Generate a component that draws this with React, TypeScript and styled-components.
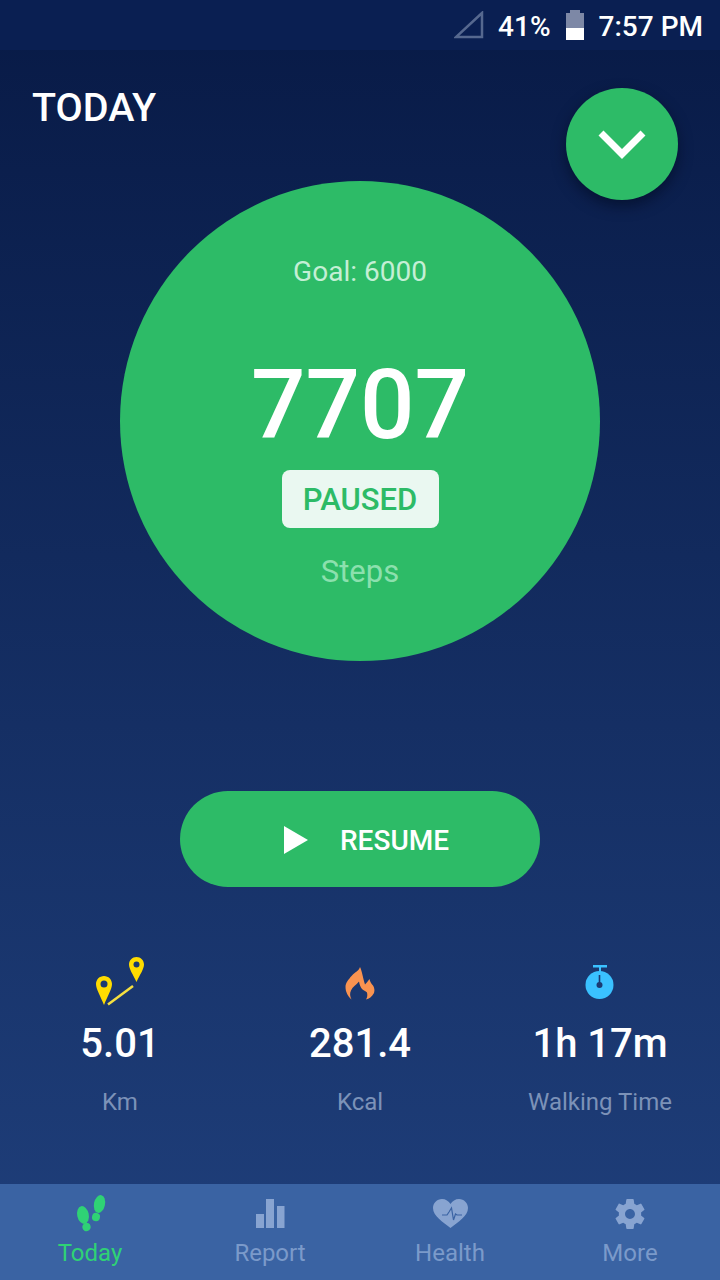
import React, { FC, ReactElement, ReactNode } from "react"
import styled, { createGlobalStyle } from "styled-components"

const GlobalStyle = createGlobalStyle`
  html, body {
    margin: 0;
    padding: 0;
    background: #0a1c48;
  }

  * {
    box-sizing: border-box;
  }
`

const Screen = styled.div`
  width: 720px;
  height: 1280px;
  display: flex;
  flex-direction: column;
  overflow: hidden;
  font-family: Roboto, "Liberation Sans", sans-serif;
  color: #fff;
  background: linear-gradient(180deg, #081a46 0%, #1f3f7b 100%);
`

const StatusBar = styled.div`
  height: 50px;
  flex: none;
  display: flex;
  align-items: center;
  justify-content: flex-end;
  padding: 2px 17px 0 14px;
  background: #0a1f52;
  font-size: 28px;
  font-weight: 500;
`

const SignalIcon = styled.svg`
  width: 30px;
  height: 28px;
  margin: 0 14px 2px 0;
`

const BatteryIcon = styled.svg`
  width: 20px;
  height: 30px;
  margin: 0 14px 2px;
`

const Main = styled.main`
  position: relative;
  flex: 1;
  display: flex;
  flex-direction: column;
  align-items: center;
`

const Title = styled.h1`
  align-self: flex-start;
  margin: 36px 0 0 32px;
  height: 44px;
  line-height: 44px;
  font-size: 39.5px;
  font-weight: 500;
`

const Fab = styled.button`
  position: absolute;
  top: 38px;
  right: 42px;
  width: 112px;
  height: 112px;
  padding: 0;
  border: none;
  border-radius: 50%;
  display: flex;
  align-items: center;
  justify-content: center;
  background: #2dbb67;
  box-shadow: 0 6px 14px rgba(2, 10, 30, 0.55);
`

const StepCircle = styled.section`
  width: 480px;
  height: 480px;
  margin-top: 51px;
  flex: none;
  border-radius: 50%;
  display: flex;
  flex-direction: column;
  align-items: center;
  background: #2dbb67;
`

const Goal = styled.div`
  margin-top: 73px;
  height: 36px;
  line-height: 36px;
  font-size: 28px;
  color: #c4efd5;
`

const StepCount = styled.div`
  margin-top: 63px;
  height: 104px;
  line-height: 104px;
  font-size: 96px;
  font-weight: 500;
`

const PausedBadge = styled.div`
  margin-top: 13px;
  width: 157px;
  height: 58px;
  border-radius: 8px;
  display: flex;
  align-items: center;
  justify-content: center;
  background: #eaf8f1;
  color: #2dbb67;
  font-size: 31px;
  font-weight: 500;
`

const StepsLabel = styled.div`
  margin-top: 24px;
  height: 40px;
  line-height: 40px;
  font-size: 31px;
  color: #8ce0ae;
`

const ResumeButton = styled.button`
  margin-top: 130px;
  width: 360px;
  height: 96px;
  flex: none;
  border: none;
  border-radius: 48px;
  display: flex;
  align-items: center;
  justify-content: center;
  gap: 32px;
  padding: 2px 0 0 13px;
  background: #2dbb67;
  color: #fff;
  font-family: inherit;
  font-size: 28px;
  font-weight: 500;
`

const StatsRow = styled.section`
  width: 100%;
  margin-top: 70px;
  display: grid;
  grid-template-columns: repeat(3, 1fr);
`

const Stat = styled.div`
  display: flex;
  flex-direction: column;
  align-items: center;
`

const StatIcon = styled.div`
  height: 52px;
  display: flex;
  align-items: center;
  justify-content: center;
`

const StatValue = styled.div`
  margin-top: 11px;
  height: 48px;
  line-height: 48px;
  font-size: 40px;
  font-weight: 500;
`

const StatLabel = styled.div`
  margin-top: 18px;
  height: 32px;
  line-height: 32px;
  font-size: 24px;
  color: #7c92b8;
`

const TabBar = styled.nav`
  height: 96px;
  flex: none;
  display: grid;
  grid-template-columns: repeat(4, 180px);
  background: #3a63a3;
`

const Tab = styled.div<{ $active?: boolean }>`
  display: flex;
  flex-direction: column;
  align-items: center;
  padding-top: 10px;
  font-size: 24px;
  color: ${({ $active }) => ($active ? "#2fd275" : "#7b9aca")};
`

const TabIcon = styled.svg<{ $active?: boolean }>`
  width: 40px;
  height: 40px;
  fill: ${({ $active }) => ($active ? "#2fd275" : "#88a4d1")};
  margin-bottom: 5px;
`

const RouteIcon = () => (
  <svg width="56" height="52" viewBox="0 0 56 52">
    <path d="M12 19c-4.500 0-8 3.600-8 8 0 5 4.500 12 8 21 3.500-9 8-16 8-21 0-4.400-3.500-8-8-8z" fill="#ffdc00" />
    <circle cx="12" cy="27" r="3.500" fill="#1c3a72" />
    <path d="M44.500 0c-4.200 0-7.500 3.300-7.500 7.500 0 4.500 4 10 7.500 17.500 3.500-7.500 7.500-13 7.500-17.500C52 3.300 48.700 0 44.500 0z" fill="#ffdc00" />
    <circle cx="44.500" cy="7.500" r="3" fill="#1c3a72" />
    <path d="M16 47.500 L41 29" stroke="#f5e040" strokeWidth="2.500" fill="none" />
  </svg>
)

const FlameIcon = () => (
  <svg width="32" height="34" viewBox="0 0 32 34">
    <path
      d="M16 1C15 5 11 6 8 9.500 4 14 1.500 17 1.500 21c0 5 2.500 9.500 6 12.500-1.500-3-2-6-.5-9C8.500 21 12 19 15 15.500c.5 3 1.500 5.500 3 7.500 1.500 1.500 3.500 2 5 3.500 .5 2.500 .5 4.500-1 7 3-.5 6-3 8-6.500 1-3 .2-5.500-1-7.500-1.500-1.500-3-3.500-3.500-6.500-1.500 2-3 4-4.500 5.500C18.500 10 18 5 16 1z"
      fill="#f99350"
    />
  </svg>
)

const TimerIcon = () => (
  <svg width="32" height="36" viewBox="0 0 32 36">
    <rect x="9" y="0" width="14" height="2.500" fill="#3ac1ff" />
    <rect x="15" y="2" width="2" height="5" fill="#3ac1ff" />
    <circle cx="15.500" cy="20" r="14" fill="#3ac1ff" />
    <rect x="14.700" y="10" width="1.600" height="10" fill="#1c3a72" />
    <circle cx="15.500" cy="20" r="3" fill="#1c3a72" />
  </svg>
)

interface IStatProps {
  icon: ReactNode,
  value: string,
  label: string,
}

const StatItem: FC<IStatProps> = ({ icon, value, label }): ReactElement => (
  <Stat>
    <StatIcon>{icon}</StatIcon>
    <StatValue>{value}</StatValue>
    <StatLabel>{label}</StatLabel>
  </Stat>
)

const App: FC = (): ReactElement => (
  <Screen>
    <GlobalStyle />
    <StatusBar>
      <SignalIcon viewBox="0 0 30 28">
        <path d="M28 2 L2 26 H28 Z" fill="none" stroke="#56688f" strokeWidth="2.500" />
      </SignalIcon>
      <span>41%</span>
      <BatteryIcon viewBox="0 0 20 30">
        <path d="M5 0h10v3h4v27H1V3h4z" fill="#7d88a6" />
        <rect x="1" y="18" width="18" height="12" fill="#fff" />
      </BatteryIcon>
      <span>7:57 PM</span>
    </StatusBar>
    <Main>
      <Title>TODAY</Title>
      <Fab aria-label="expand">
        <svg width="48" height="30" viewBox="0 0 48 30">
          <path d="M3 4 L24 25 L45 4" fill="none" stroke="#fff" strokeWidth="7" />
        </svg>
      </Fab>
      <StepCircle>
        <Goal>Goal: 6000</Goal>
        <StepCount>7707</StepCount>
        <PausedBadge>PAUSED</PausedBadge>
        <StepsLabel>Steps</StepsLabel>
      </StepCircle>
      <ResumeButton>
        <svg width="24" height="28" viewBox="0 0 24 28">
          <path d="M0 0 L24 14 L0 28 Z" fill="#fff" />
        </svg>
        RESUME
      </ResumeButton>
      <StatsRow>
        <StatItem icon={<RouteIcon />} value="5.01" label="Km" />
        <StatItem icon={<FlameIcon />} value="281.4" label="Kcal" />
        <StatItem icon={<TimerIcon />} value="1h 17m" label="Walking Time" />
      </StatsRow>
    </Main>
    <TabBar>
      <Tab $active>
        <TabIcon $active viewBox="0 0 40 40">
          <ellipse cx="0" cy="0" rx="5.800" ry="9" transform="translate(13 21) rotate(-12)" />
          <ellipse cx="0" cy="0" rx="4.200" ry="4.200" transform="translate(16.500 33) rotate(-15)" />
          <ellipse cx="0" cy="0" rx="5.500" ry="9" transform="translate(29.500 10) rotate(12)" />
          <ellipse cx="0" cy="0" rx="4" ry="4.200" transform="translate(26 23) rotate(15)" />
        </TabIcon>
        Today
      </Tab>
      <Tab>
        <TabIcon viewBox="0 0 40 40">
          <rect x="6" y="20" width="8" height="14" />
          <rect x="16" y="5" width="8" height="29" />
          <rect x="27" y="12" width="7.500" height="22" />
        </TabIcon>
        Report
      </Tab>
      <Tab>
        <TabIcon viewBox="0 0 40 40">
          <path d="M20.500 34 C13 28 3 22 3 14 C3 9 7 5 12 5 C15.500 5 18.800 7 20.500 10 C22.200 7 25.500 5 29 5 C34 5 38 9 38 14 C38 22 28 28 20.500 34 Z" />
          <path d="M12 21 H17 L19 18 L21.500 14 L23.500 26 L25.500 20 L27 21 H32" fill="none" stroke="#3a63a3" strokeWidth="1.200" />
        </TabIcon>
        Health
      </Tab>
      <Tab>
        <TabIcon viewBox="0 0 24 24">
          <g transform="translate(12 12) scale(0.93) translate(-12 -12)">
            <path d="M19.140 12.940c.04-.3.060-.61.060-.94 0-.32-.02-.64-.07-.94l2.030-1.580a.49.49 0 0 0 .12-.61l-1.920-3.320a.488.488 0 0 0-.59-.22l-2.390.96c-.5-.38-1.030-.7-1.620-.94l-.36-2.540a.484.484 0 0 0-.48-.41h-3.840c-.24 0-.43.17-.47.41l-.36 2.540c-.59.24-1.130.57-1.620.94l-2.390-.96c-.22-.08-.47 0-.59.22L2.740 8.870c-.12.21-.08.47.12.61l2.030 1.580c-.05.3-.09.63-.09.94s.02.64.07.94l-2.030 1.580a.49.49 0 0 0-.12.61l1.920 3.320c.12.22.37.29.59.22l2.390-.96c.5.38 1.030.7 1.620.94l.36 2.540c.05.24.24.41.48.41h3.840c.24 0 .44-.17.47-.41l.36-2.540c.59-.24 1.130-.56 1.620-.94l2.390.96c.22.08.47 0 .59-.22l1.920-3.320c.12-.22.07-.47-.12-.61l-2.010-1.580zM12 15.200c-1.760 0-3.200-1.440-3.200-3.200s1.440-3.200 3.200-3.200 3.200 1.440 3.200 3.200-1.440 3.200-3.200 3.200z" />
          </g>
        </TabIcon>
        More
      </Tab>
    </TabBar>
  </Screen>
)

export default App
